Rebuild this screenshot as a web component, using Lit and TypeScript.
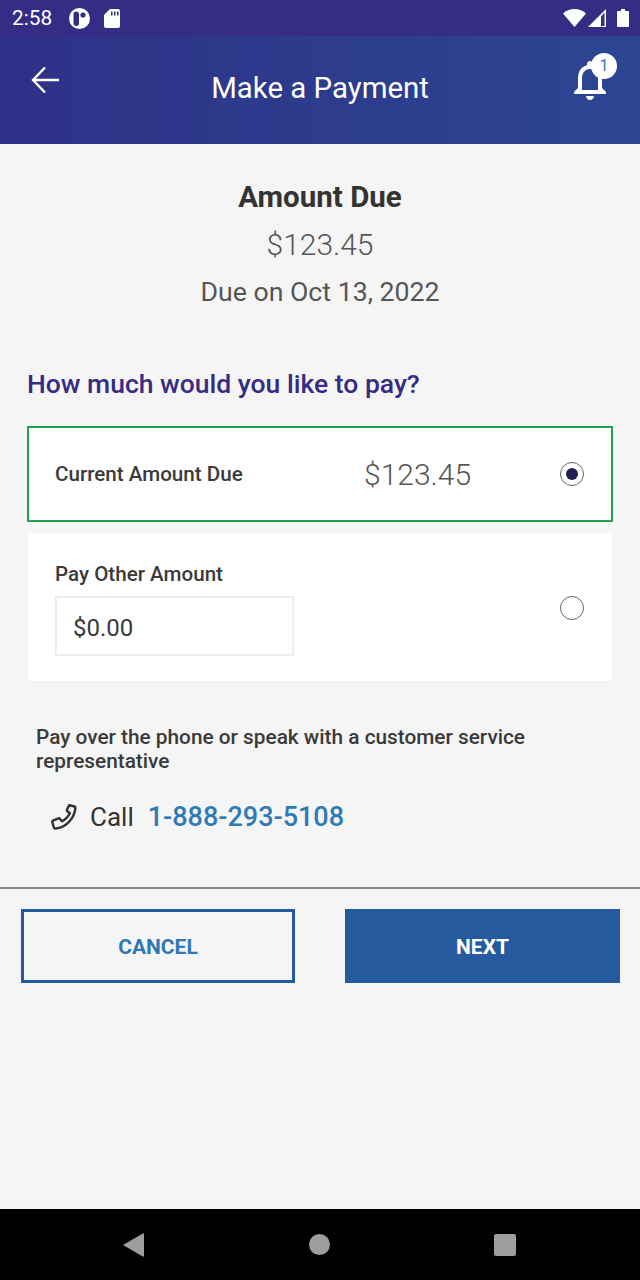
import {LitElement, html, css} from 'lit';
import {customElement} from 'lit/decorators.js';

@customElement('app-root')
export class AppRoot extends LitElement {
  static styles = css`
    :host {
      display: flex;
      flex-direction: column;
      width: 640px;
      height: 1280px;
      background: #f5f5f5;
      font-family: Roboto, 'Liberation Sans', sans-serif;
      color: #333;
      overflow: hidden;
    }
    svg { display: block; }

    .status {
      height: 36px;
      flex: none;
      background: #352c85;
      display: flex;
      align-items: center;
      color: #fff;
      padding: 0 11px 0 12px;
      box-sizing: border-box;
    }
    .time { font-size: 20.8px; width: 57px; }
    .status-left { display: flex; align-items: center; flex: 1; }
    .pin { margin-right: 14px; }
    .status-right { display: flex; align-items: center; }
    .signal { margin: 0 11px 0 2px; }

    .header {
      height: 108px;
      flex: none;
      background: linear-gradient(90deg, #2e3187, #2c4693);
      display: flex;
      align-items: flex-start;
      justify-content: space-between;
      color: #fff;
      padding: 0 26px 0 30px;
      box-sizing: border-box;
    }
    .back { margin-top: 28px; }
    .title {
      font-size: 29.4px;
      line-height: 34px;
      margin-top: 35px;
      position: absolute;
      left: 0;
      right: 0;
      text-align: center;
    }
    .bell-wrap { position: relative; width: 48px; height: 48px; margin-top: 20px; }
    .badge {
      position: absolute;
      left: 25px;
      top: -3px;
      width: 26px;
      height: 26px;
      border-radius: 50%;
      background: #fff;
      color: #2f7ab5;
      font-size: 16px;
      line-height: 26px;
      text-align: center;
    }

    .main { flex: 1; display: flex; flex-direction: column; }
    .summary { text-align: center; padding-top: 35px; }
    .due-label { font-size: 29.5px; font-weight: 700; line-height: 36px; color: #333; }
    .due-amount { font-size: 30px; font-weight: 300; line-height: 36px; color: #555; margin-top: 12px; }
    .due-date { font-size: 26.7px; line-height: 36px; color: #555; margin-top: 11px; }

    .question {
      font-size: 26.5px;
      font-weight: 500;
      line-height: 32px;
      color: #352c85;
      margin: 58px 0 0 27px;
    }

    .card {
      background: #fff;
      box-sizing: border-box;
      display: flex;
      align-items: center;
    }
    .current {
      margin: 26px 27px 0 27px;
      height: 96px;
      border: 2px solid #1fa055;
      padding: 0 27px 0 26px;
    }
    .other {
      margin: 11px 28px 0 28px;
      height: 149px;
      padding: 0 28px 0 27px;
      align-items: flex-start;
      border-bottom: 1px solid #f0f0f0;
    }
    .card-label { font-size: 20.6px; font-weight: 500; line-height: 24px; color: #3a3a3a; }
    .current .card-label { width: 281px; flex: none; }
    .card-amount { font-size: 30px; font-weight: 300; color: #555; flex: 1; padding-left: 28px; }
    .radio {
      width: 24px;
      height: 24px;
      box-sizing: border-box;
      border: 1px solid #666;
      border-radius: 50%;
      display: flex;
      align-items: center;
      justify-content: center;
      flex: none;
      background: #fff;
    }
    .dot { width: 12px; height: 12px; border-radius: 50%; background: #221f54; }
    .other-body { flex: 1; padding-top: 29px; }
    .other .radio { margin-top: 63px; }
    .input {
      margin-top: 10px;
      width: 239px;
      height: 60px;
      box-sizing: border-box;
      border: 2px solid #eee;
      padding: 2px 0 0 16px;
      font-size: 24px;
      line-height: 56px;
      color: #3a3a3a;
    }

    .phone-note {
      font-size: 20.8px;
      font-weight: 500;
      line-height: 24px;
      color: #3a3a3a;
      margin: 43px 60px 0 36px;
    }
    .call {
      display: flex;
      align-items: center;
      margin: 26px 0 0 49px;
      height: 36px;
    }
    .call-word { font-size: 26px; color: #333; margin-left: 11px; }
    .call-num { font-size: 27px; font-weight: 500; color: #2f7ab5; margin-left: 14px; }

    .divider { height: 2px; background: #888; margin-top: 52px; }
    .actions {
      display: flex;
      justify-content: space-between;
      margin: 20px 20px 0 21px;
    }
    .btn {
      width: 274px;
      height: 74px;
      box-sizing: border-box;
      display: flex;
      align-items: center;
      justify-content: center;
      padding-top: 2px;
      font-size: 21px;
      font-weight: 700;
    }
    .cancel { border: 3px solid #255a9e; color: #2f78b5; }
    .next { background: #255a9e; color: #fff; width: 275px; }

    .nav {
      height: 71px;
      flex: none;
      background: #000;
      display: flex;
      align-items: center;
      padding-left: 123px;
      box-sizing: border-box;
    }
    .nav .home { margin-left: 165px; }
    .nav .recent { margin-left: 164px; }
  `;

  render() {
    return html`
      <div class="status">
        <div class="status-left">
          <span class="time">2:58</span>
          <svg class="pin" width="21" height="21" viewBox="0 0 21 21">
            <circle cx="10.5" cy="10.5" r="10.5" fill="#fff" />
            <rect x="4.5" y="3.5" width="5.5" height="14.5" rx="2.75" fill="#352c85" />
            <circle cx="14" cy="7" r="2.6" fill="#352c85" />
          </svg>
          <svg width="16" height="19" viewBox="0 0 16 19">
            <path d="M6 0h8a2 2 0 0 1 2 2v15a2 2 0 0 1-2 2H2a2 2 0 0 1-2-2V6z" fill="#fff" />
            <path d="M7 2.5h1.500v4H7zM10 2.500h1.500v4H10zM13 2.500h1.500v4H13z" fill="#352c85" />
          </svg>
        </div>
        <div class="status-right">
          <svg width="23" height="18" viewBox="0 0 23 18">
            <path d="M11.5 18L0 4.400C3 1.800 7 0 11.500 0S20 1.800 23 4.400z" fill="#fff" />
          </svg>
          <svg class="signal" width="18" height="18" viewBox="0 0 18 18">
            <path d="M18 0v18H0z" fill="#fff" />
            <path d="M13 7.5L13 17H16.5V3.500z" fill="#352c85" />
          </svg>
          <svg width="12" height="18" viewBox="0 0 12 18">
            <path d="M4 0h4v2h3a1 1 0 0 1 1 1v14a1 1 0 0 1-1 1H1a1 1 0 0 1-1-1V3a1 1 0 0 1 1-1h3z" fill="#fff" />
          </svg>
        </div>
      </div>

      <div class="header">
        <svg class="back" width="32" height="32" viewBox="0 0 32 32" fill="none" stroke="#fff" stroke-width="2.4">
          <path d="M29 16H4.500M15 3.500L3 16 15 28.500" />
        </svg>
        <div class="title">Make a Payment</div>
        <div class="bell-wrap">
          <svg width="48" height="48" viewBox="0 0 24 24" fill="#fff">
            <path d="M12 22c1.100 0 2-.9 2-2h-4c0 1.100.9 2 2 2zm6-6v-5c0-3.070-1.630-5.640-4.500-6.320V4c0-.83-.67-1.500-1.500-1.500s-1.500.67-1.500 1.500v.68C7.640 5.360 6 7.920 6 11v5l-2 2v1h16v-1l-2-2zm-2 1H8v-6c0-2.480 1.510-4.500 4-4.500s4 2.020 4 4.500v6z" />
          </svg>
          <div class="badge">1</div>
        </div>
      </div>

      <div class="main">
        <div class="summary">
          <div class="due-label">Amount Due</div>
          <div class="due-amount">$123.45</div>
          <div class="due-date">Due on Oct 13, 2022</div>
        </div>

        <div class="question">How much would you like to pay?</div>

        <div class="card current">
          <div class="card-label">Current Amount Due</div>
          <div class="card-amount">$123.45</div>
          <div class="radio"><div class="dot"></div></div>
        </div>

        <div class="card other">
          <div class="other-body">
            <div class="card-label">Pay Other Amount</div>
            <div class="input">$0.00</div>
          </div>
          <div class="radio"></div>
        </div>

        <div class="phone-note">Pay over the phone or speak with a customer service representative</div>
        <div class="call">
          <svg width="30" height="30" viewBox="0 0 30 30" fill="none" stroke="#333" stroke-width="2.4" stroke-linejoin="round">
            <path d="M19.5 3l6 1.500c.6.200 1 .7.900 1.400C25.500 16.500 17 25.500 6.300 26.500c-.7 0-1.200-.3-1.400-.9L3.300 20c-.2-.6.100-1.200.7-1.400l5.500-2.300c.5-.2 1.100-.1 1.400.4l2 2.600c3.500-1.700 6.300-4.500 8-8l-2.600-2.100c-.5-.3-.6-.9-.4-1.400l2.300-4.700" />
          </svg>
          <span class="call-word">Call</span>
          <span class="call-num">1-888-293-5108</span>
        </div>

        <div class="divider"></div>
        <div class="actions">
          <div class="btn cancel">CANCEL</div>
          <div class="btn next">NEXT</div>
        </div>
      </div>

      <div class="nav">
        <svg width="21" height="24" viewBox="0 0 21 24"><path d="M21 1v22c0 .8-.6 1-1.200.6L0 12 19.800.4C20.400 0 21 .2 21 1z" fill="#9e9e9e" /></svg>
        <svg class="home" width="21" height="21" viewBox="0 0 21 21"><circle cx="10.5" cy="10.5" r="10.5" fill="#9e9e9e" /></svg>
        <svg class="recent" width="22" height="22" viewBox="0 0 22 22"><rect width="22" height="22" rx="2" fill="#9e9e9e" /></svg>
      </div>
    `;
  }
}
